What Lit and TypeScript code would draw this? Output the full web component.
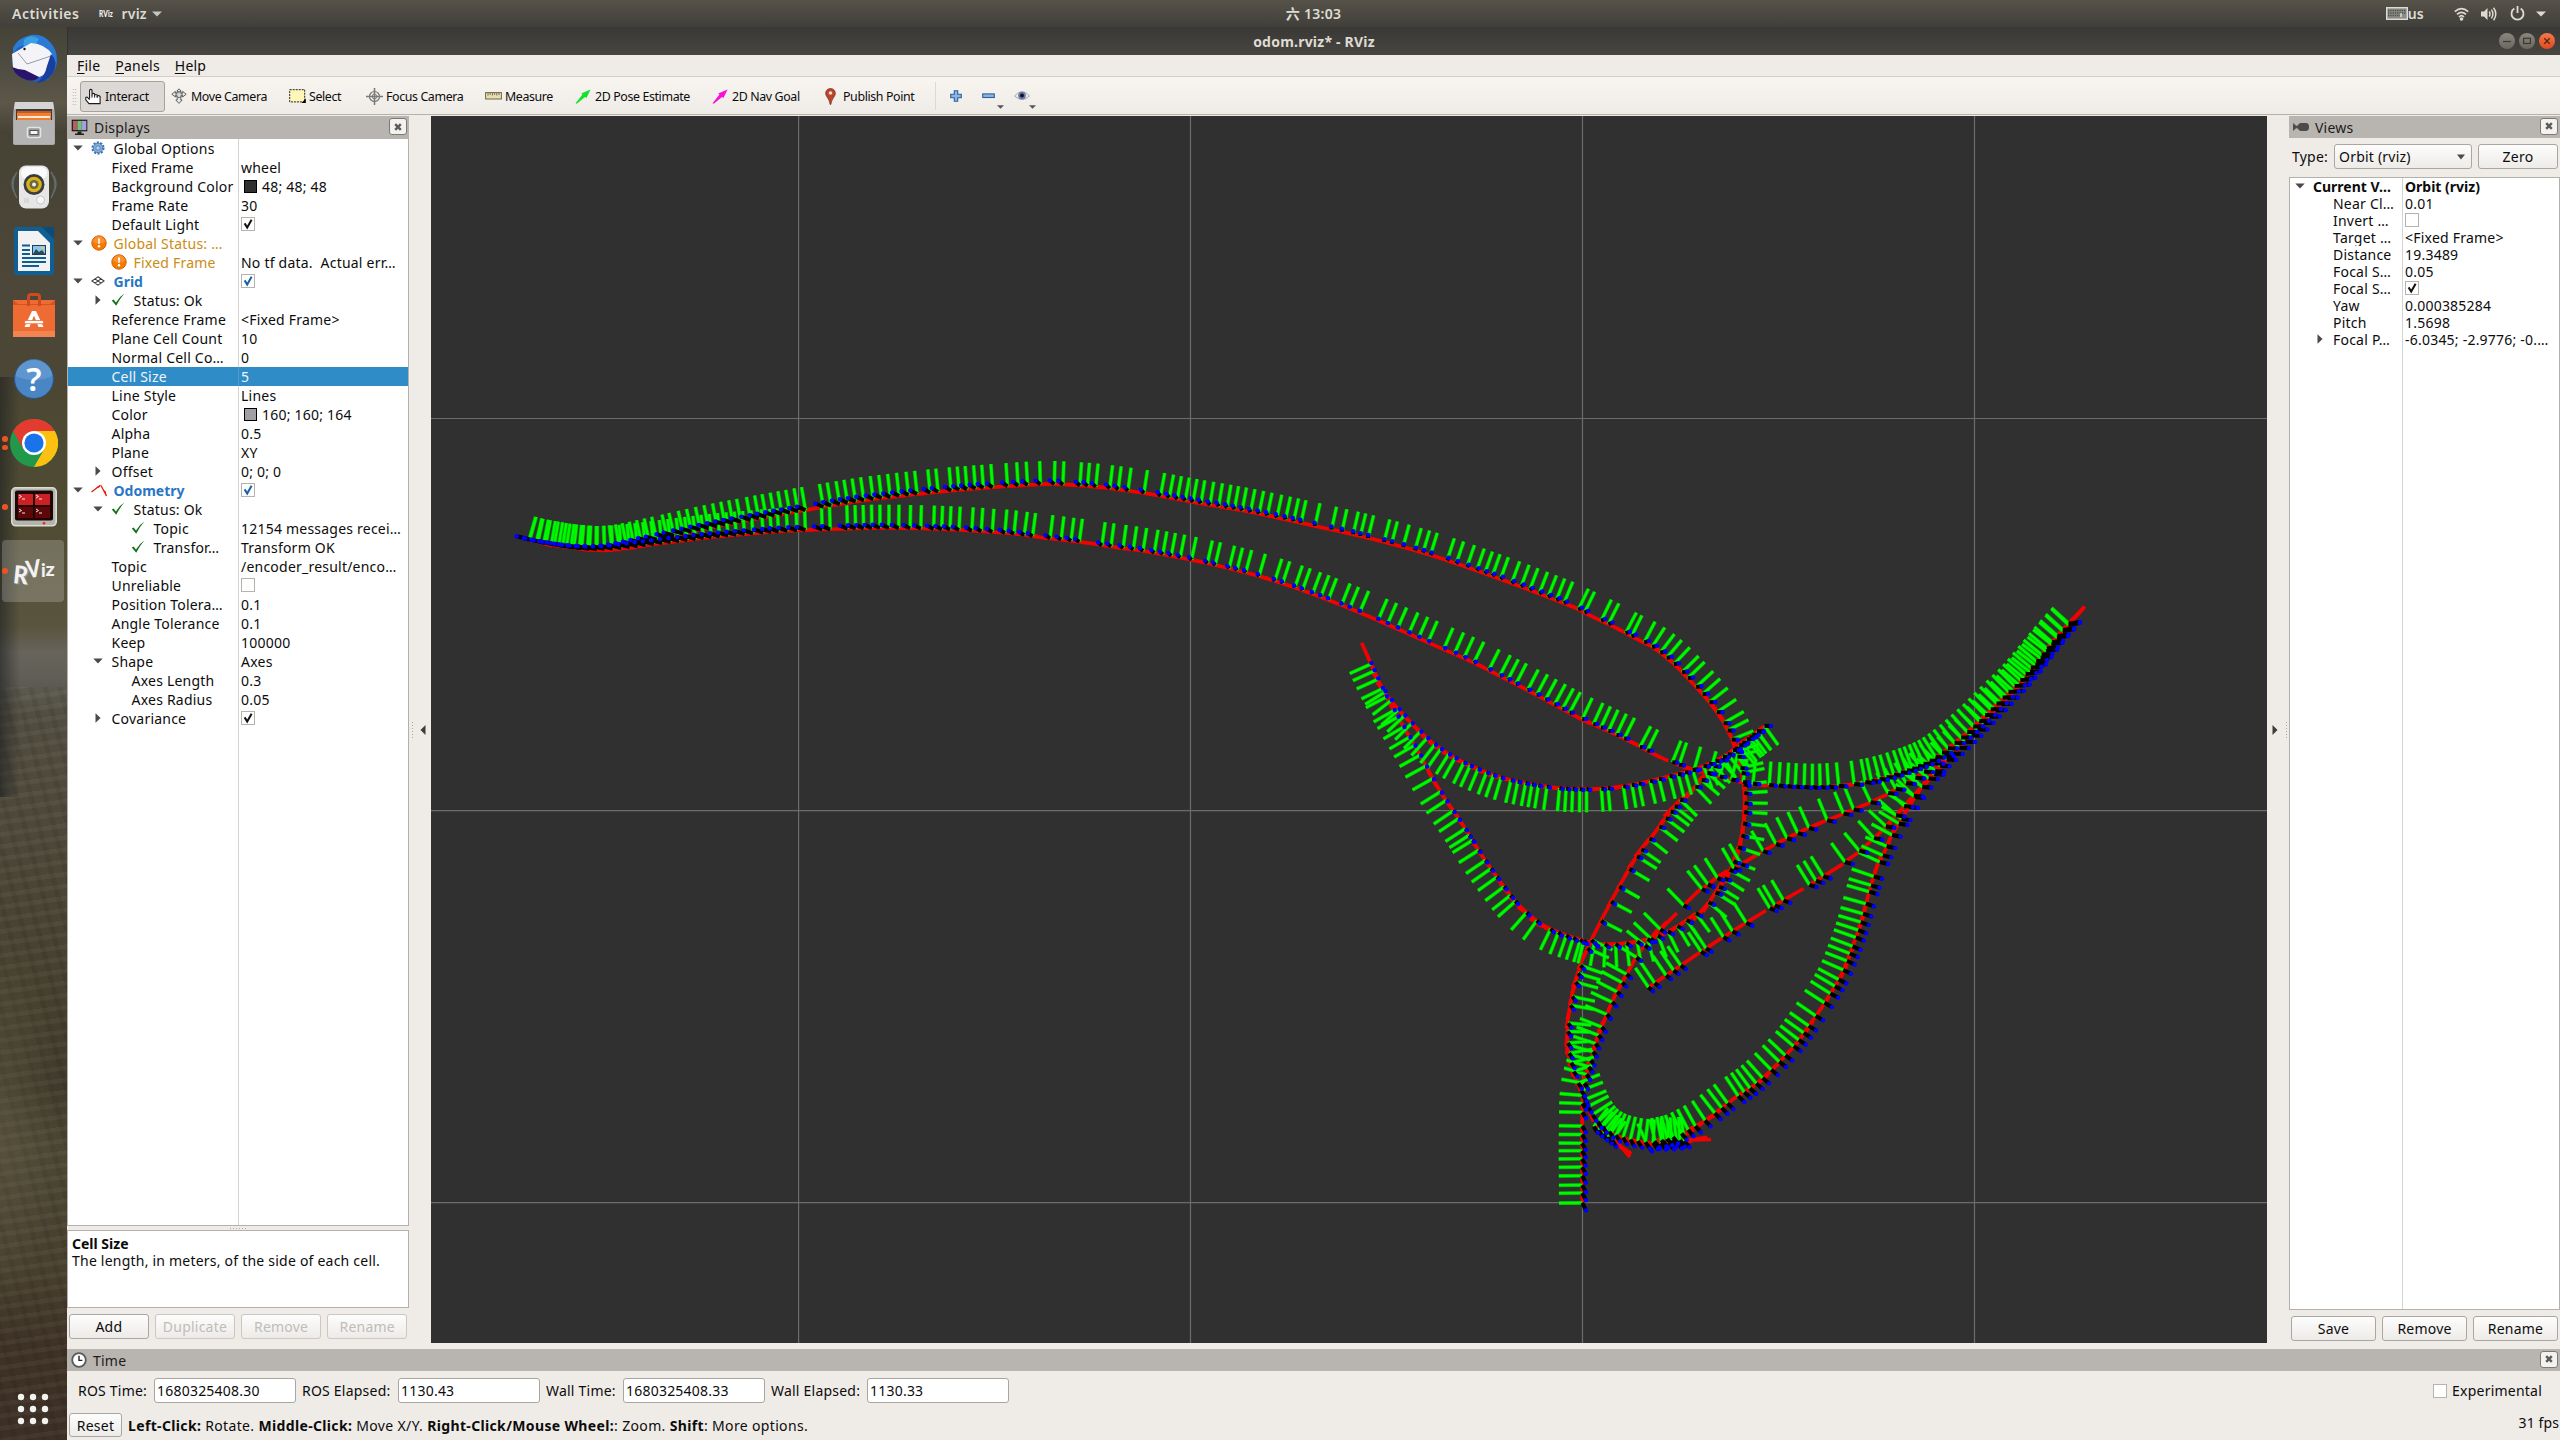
import { LitElement, html, svg, css, nothing, TemplateResult } from "lit";
import { customElement, property } from "lit/decorators.js";
import { classMap } from "lit/directives/class-map.js";

/* ---------- odometry trail ---------- */

type Pt = [number, number];
type Mark =
  | { axis: 0 | 1; at: number[]; k?: number; o?: number }
  | { step: number; axis?: 0 | 1; until?: number };
interface Trail { points: Pt[]; marks: Mark[] }

const VIEW = { x: 431, y: 116, w: 1836, h: 1227 };
const FOCUS: Pt = [1349, 730];
const AXIS = 23.3;
const MAX_GAP = 110;

const TIP_LEFT: Pt[] = [[522, 537], [532, 540], [543, 542.5], [557, 545], [573, 547.5], [590, 549], [606, 549]];

const TRAILS: Trail[] = [
  {
    // upper arc, then down, west and up to the north-west turning point
    points: [...TIP_LEFT, [622, 547], [655, 540], [704, 529], [745, 521], [806, 510], [867, 500], [937, 492], [990, 487.5], [1039, 484.5],
      [1064, 484.7], [1097, 487], [1143, 493], [1193, 502], [1250, 512], [1315, 526], [1368, 538], [1430, 555], [1500, 579], [1563, 603],
      [1585, 613], [1608, 624], [1631, 636], [1649, 645], [1668, 659], [1689.5, 680], [1710, 703], [1724, 724], [1733, 743], [1740.5, 768],
      [1744, 790], [1744, 813], [1741, 837], [1737, 850], [1731, 867], [1720, 885], [1708, 903], [1695, 914], [1674, 928], [1651, 938],
      [1626, 943], [1605, 944], [1590, 942], [1575, 938], [1553, 930], [1536, 920], [1520, 906], [1508, 892], [1485, 860], [1464, 827], [1439.5, 790],
      [1416.5, 749], [1396, 714], [1383, 690], [1370.6, 663]],
    marks: [
      { step: 7.4, axis: 0, until: 664 },
      { axis: 0, o: 503, k: 2.45, at: [403, 420, 442, 463, 484, 505, 525, 545, 564, 584, 607, 627, 645, 665, 684, 703, 723, 742, 786, 805, 826, 845, 865, 885, 908, 928, 949, 971, 994, 1015, 1047, 1067, 1098, 1118, 1137, 1158, 1178, 1200, 1237, 1263, 1286, 1318] },
      { axis: 0, o: 1060, k: 3, at: [-16, 10, 60, 84, 109, 150, 175, 204, 252, 302, 328, 352, 376, 400, 424, 450, 477, 501, 524, 547, 572, 598, 623, 652, 677, 702, 724, 766, 816, 846, 880, 902, 925, 972, 995, 1030, 1065, 1090, 1112, 1162, 1190, 1222, 1250, 1275, 1298, 1322, 1355, 1383, 1410, 1438, 1465, 1490, 1512, 1555] },
      { axis: 0, o: 1340, k: 1.96, at: [480, 512, 527, 560, 572, 597, 612, 628] },
      { axis: 1, o: 600, k: 3, at: [174, 193, 218, 235, 262, 283, 307, 337, 370, 392, 420, 455, 470, 505, 520, 555, 580, 610, 637, 670, 707, 742, 785, 810, 835, 860, 878, 908, 940] },
      { step: 10.5, axis: 0, until: 1582 },
      { axis: 0, o: 1340, k: 1.96, at: [470, 457, 443, 428, 412, 385, 366] },
      { axis: 1, o: 600, k: 3, at: [903, 885, 860, 830, 805, 780, 750, 720, 705, 685, 655, 632, 600, 575, 535, 497, 465, 435, 410, 380, 350, 330, 290, 265, 237, 212, 192] },
    ],
  },
  {
    // curve that backs up into the north-west turning point
    points: [[1764.5, 726], [1748, 738], [1733, 750], [1715, 761], [1692, 770], [1666, 777], [1636, 784], [1608, 788], [1585, 789], [1559, 788],
      [1531, 784], [1503, 778], [1478, 769], [1455, 758], [1434, 744], [1416.5, 728], [1401, 712], [1390, 699], [1381, 685], [1370.6, 663]],
    marks: [
      { axis: 0, o: 1340, k: 1.96, at: [832, 818, 808, 797, 782, 770, 750, 735, 723, 712, 690, 676, 662, 645, 625, 607, 585, 572, 555, 525, 512, 483, 470, 455, 443, 430, 405, 388, 376, 363, 348, 335, 315, 300, 287, 270, 255, 242, 225, 212, 197, 185, 170, 157, 140, 126, 115, 100, 88] },
    ],
  },
  {
    // lower arc running east and up to the north-east turning point
    points: [...TIP_LEFT, [622, 548], [655, 544], [704, 538], [741, 534.5], [786, 531], [839, 529], [888, 528], [949, 529.5], [1006, 533], [1035, 536.5],
      [1080, 542], [1100, 545], [1143, 551], [1192, 560], [1247, 573], [1293, 587], [1341, 605], [1378, 620.5], [1427, 642], [1473, 662.5], [1527, 690],
      [1568, 712], [1582, 719], [1621, 737], [1646, 750], [1674, 763], [1697, 770], [1717.5, 776], [1743, 782], [1771, 785], [1814, 787], [1845, 785],
      [1871, 781], [1896, 774], [1927, 762], [1952, 745], [1978, 722], [1998, 702], [2018.6, 682], [2034, 664], [2054, 640], [2073, 619]],
    marks: [
      { step: 8, axis: 0, until: 758 },
      { axis: 0, o: 500, k: 2.45, at: [645, 665, 683, 705, 728, 749, 790, 810, 852, 872, 892, 912, 932, 953, 977, 1005, 1032, 1063, 1083, 1103, 1125, 1157, 1180, 1207, 1237, 1260, 1285, 1305, 1348, 1375, 1400, 1420, 1475, 1497] },
      { axis: 0, o: 1060, k: 3, at: [150, 190, 220, 250, 283, 310, 335, 362, 395, 442, 466, 508, 532, 558, 597, 645, 668, 705, 728, 758, 783, 806, 845, 870, 900, 955, 983, 1012, 1047, 1076, 1104, 1152, 1184, 1213, 1242, 1287, 1320, 1344, 1368, 1403, 1430, 1457, 1484, 1508, 1530] },
      { axis: 0, o: 1340, k: 1.96, at: [475, 497, 512, 527, 542, 558, 588, 603, 652, 665, 695, 725, 745, 768, 790, 810, 842, 860, 877, 893, 910, 926, 942, 958, 978, 1008, 1030, 1042, 1058, 1072, 1086, 1100, 1112, 1122, 1133, 1144, 1156, 1168, 1180, 1192, 1205] },
      { step: 8 },
    ],
  },
  {
    // vertical start segment, up through the inner loop and on to the north-east
    points: [[1582.3, 1204], [1582, 1150], [1582.3, 1117], [1582.8, 1097], [1585, 1080], [1590, 1063], [1595, 1045], [1601.7, 1027], [1611.7, 1003],
      [1623.5, 980], [1636.7, 957], [1648, 941.7], [1661.7, 928], [1684, 905], [1702, 889], [1717.5, 878], [1743, 863], [1776, 844], [1809, 828],
      [1842.5, 814], [1871, 802], [1893.6, 790], [1916.5, 777], [1932, 765], [1952, 750]],
    marks: [
      { axis: 1, o: 900, k: 3, at: [908, 878, 855, 827, 800, 776, 752, 728, 703, 678, 636, 610, 585, 550, 522, 500, 480, 455, 430, 405, 380, 342, 305, 275, 247, 222, 172, 135, 115, 88] },
      { axis: 0, o: 1340, k: 1.96, at: [674, 710, 722, 740, 773, 787, 830, 855, 877, 898, 920, 955, 987, 1007, 1040, 1075, 1090, 1110, 1128, 1145, 1165, 1185] },
    ],
  },
  {
    // straight middle branch
    points: [[1648, 987.5], [1674, 970], [1702, 951], [1733, 931], [1768.6, 909], [1784, 900], [1809, 885], [1845, 862], [1873, 839], [1888, 824],
      [1906, 804], [1927, 782], [1945, 762]],
    marks: [
      { axis: 0, o: 1340, k: 1.96, at: [605, 617, 640, 654, 668, 708, 718, 752, 770, 797, 843, 853, 870, 920, 933, 948, 990, 1018, 1047, 1070, 1090, 1106, 1125, 1142, 1165] },
    ],
  },
  {
    // south-west leg that drops past the origin and turns east at the bottom
    points: [[1764.5, 726], [1733, 750], [1712, 768], [1697, 785], [1679, 801], [1659, 827], [1641, 850], [1619, 887], [1601, 921], [1590, 943],
      [1580, 967], [1572, 997], [1568, 1024], [1568, 1045], [1572, 1066], [1581, 1090], [1588, 1107], [1598, 1122], [1610, 1132], [1624, 1138], [1644, 1142], [1667, 1143],
      [1690, 1140]],
    marks: [
      { step: 9, axis: 1, until: 780 },
      { axis: 1, o: 600, k: 3, at: [560, 600, 620, 635, 655, 680, 717, 750, 770, 808, 860, 905, 963, 1020, 1045, 1097, 1120, 1147, 1190] },
      { axis: 1, o: 900, k: 3, at: [317, 370, 395, 430, 460, 490, 515, 550, 573, 600, 620, 645, 665, 680] },
      { step: 7.5 },
    ],
  },
  {
    // outer loop from the bottom turn up the right side to the north-east turning point
    points: [[1637, 1142], [1655, 1141], [1673, 1137], [1690, 1129], [1707, 1119], [1728, 1103], [1753, 1086], [1772, 1069], [1793, 1047], [1808, 1027],
      [1825, 1002], [1840, 977], [1850, 953], [1859, 928], [1868, 896], [1875, 873], [1883, 855], [1891, 837], [1904, 815], [1916.5, 795],
      [1929, 778], [1942, 764], [1957, 750], [1975, 732], [1998, 708], [2018.6, 686], [2034, 667], [2054, 641], [2071, 622]],
    marks: [
      { axis: 0, o: 1540, k: 3, at: [345, 365, 382, 400, 425, 445, 467, 496, 525, 545, 563, 595, 613, 630, 650, 668, 694, 718, 737, 762, 777, 792, 807] },
      { axis: 1, o: 900, k: 3, at: [347, 308, 280, 258, 238, 210, 182, 160, 138, 112, 90, 65, 40, 10] },
      { axis: 1, o: 600, k: 3, at: [875, 855, 828, 785, 765, 738, 705, 670, 655, 620, 590, 560, 535, 512, 497] },
      { step: 8.4 },
    ],
  },
  {
    // short reversing moves at the bottom of the loop
    points: [[1589, 1123], [1597, 1129], [1606, 1136], [1616, 1143]],
    marks: [{ step: 5.5 }],
  },
  {
    points: [[1640, 1149], [1652, 1143], [1666, 1141], [1684, 1140]],
    marks: [{ step: 8 }],
  },
];

/** Catmull-Rom subdivision of the control points. */
function densify(p: Pt[]): Pt[] {
  const out: Pt[] = [];
  for (let i = 0; i < p.length - 1; i++) {
    const a = p[Math.max(0, i - 1)], b = p[i], c = p[i + 1], d = p[Math.min(p.length - 1, i + 2)];
    const n = Math.max(6, Math.ceil(Math.hypot(c[0] - b[0], c[1] - b[1]) * 2));
    for (let j = 0; j < n; j++) {
      const t = j / n, t2 = t * t, t3 = t2 * t;
      const f = (k: 0 | 1) =>
        0.5 * (2 * b[k] + (c[k] - a[k]) * t + (2 * a[k] - 5 * b[k] + 4 * c[k] - d[k]) * t2 + (3 * b[k] - a[k] - 3 * c[k] + d[k]) * t3);
      out.push([f(0), f(1)]);
    }
  }
  out.push(p[p.length - 1]);
  return out;
}

function poses(trail: Trail): number[][] {
  const c = densify(trail.points);
  const dist = (a: number, b: number) => Math.hypot(c[b][0] - c[a][0], c[b][1] - c[a][1]);
  const res: number[][] = [];
  let i = 0;
  const emit = (n: number) => {
    const w = 14;
    const a = c[Math.max(0, n - w)], b = c[Math.min(c.length - 1, n + w)];
    const l = Math.hypot(b[0] - a[0], b[1] - a[1]) || 1;
    res.push([c[n][0], c[n][1], (b[0] - a[0]) / l, (b[1] - a[1]) / l]);
  };
  for (const m of trail.marks) {
    if ("at" in m) {
      for (const raw of m.at) {
        const v = (m.o ?? 0) + raw / (m.k ?? 1);
        let j = i, run = 0, hit = false;
        while (j < c.length - 1 && run < MAX_GAP) {
          if ((c[j][m.axis] - v) * (c[j + 1][m.axis] - v) <= 0) { hit = true; break; }
          run += dist(j, j + 1);
          j++;
        }
        if (hit) { emit(j); i = j + 1; }
      }
    } else {
      let acc = 0;
      while (i < c.length - 1) {
        const q = c[i], r = c[i + 1];
        if (m.axis !== undefined && (q[m.axis] - m.until!) * (r[m.axis] - m.until!) <= 0) break;
        acc += dist(i, i + 1);
        i++;
        if (acc >= m.step) { emit(i); acc = 0; }
      }
    }
  }
  return res;
}

function buildTrails() {
  let red = "", green = "", black = "", blue = "";
  const n = (v: number) => v.toFixed(1);
  for (const t of TRAILS) {
    for (const [x, y, hx, hy] of poses(t)) {
      const px = x - VIEW.x, py = y - VIEW.y;
      const bx = px + (x - FOCUS[0]) * 0.0157, by = py + (y - FOCUS[1]) * 0.0157;
      red += `M${n(px)} ${n(py)}l${n(hx * AXIS)} ${n(hy * AXIS)}`;
      green += `M${n(px)} ${n(py)}l${n(hy * AXIS)} ${n(-hx * AXIS)}`;
      black += `M${n(px)} ${n(py)}L${n(bx)} ${n(by)}`;
      blue += `M${n(bx)} ${n(by)}h.1`;
    }
  }
  red += `M${1617 - VIEW.x} ${1142 - VIEW.y}L${1630 - VIEW.x} ${1157 - VIEW.y}M${1690 - VIEW.x} ${1140 - VIEW.y}L${1711 - VIEW.x} ${1139.5 - VIEW.y}`;
  return { red, green, black, blue };
}
const PATHS = buildTrails();

@customElement("rviz-scene")
class RvizScene extends LitElement {
  static styles = css`
    :host { display: block; background: #303030; overflow: hidden; }
    svg { display: block; }
    path { fill: none; }
    .grid { stroke: #6c6c6d; stroke-width: 1.2; }
    .red { stroke: #f50000; stroke-width: 3.6; }
    .edge { stroke: #00a500; stroke-width: 4; }
    .green { stroke: #00f800; stroke-width: 2.6; }
    .black { stroke: #000; stroke-width: 4; }
    .blue { stroke: #0000ff; stroke-width: 4.4; stroke-linecap: round; }
  `;
  render() {
    return html`<svg width=${VIEW.w} height=${VIEW.h}>
      <path class="grid" d="M367.6 0V1227M759.5 0V1227M1151.5 0V1227M1543.5 0V1227M0 302.5H1836M0 694.6H1836M0 1086.6H1836" />
      <path class="red" d=${PATHS.red} />
      <path class="edge" d=${PATHS.green} />
      <path class="green" d=${PATHS.green} />
      <path class="black" d=${PATHS.black} />
      <path class="blue" d=${PATHS.blue} />
    </svg>`;
  }
}

/* ---------- icons ---------- */

const check = (blue: boolean) => html`<svg width="12" height="12" viewBox="0 0 12 12"><path d="M2.6 5.4L5.2 9.6L9.6 1.8" fill="none" stroke=${blue ? "#1b5fa8" : "#111"} stroke-width="2"/></svg>`;
const triDown = html`<svg width="10" height="6" viewBox="0 0 10 6"><path d="M.3.5H9.7L5 5.6Z" fill="#4a4a4a"/></svg>`;
const triRight = html`<svg width="6" height="10" viewBox="0 0 6 10"><path d="M.5.3V9.7L5.6 5Z" fill="#4a4a4a"/></svg>`;
const closeX = html`<svg width="8" height="8" viewBox="0 0 8 8"><path d="M1.2 1.2L6.8 6.8M6.8 1.2L1.2 6.8" stroke="#5c5c58" stroke-width="2.5"/></svg>`;

const ICONS: Record<string, TemplateResult> = {
  gear: html`<svg width="14" height="14" viewBox="0 0 14 14"><circle cx="7" cy="7" r="5.6" fill="none" stroke="#3b6ea8" stroke-width="1.9" stroke-dasharray="2.1 1.4"/><circle cx="7" cy="7" r="4.7" fill="#86aedb" stroke="#4a7fbb"/><circle cx="7" cy="7" r="2.2" fill="#b8d0ec" stroke="#4478b4" stroke-width=".8"/></svg>`,
  warn: html`<svg width="16" height="16" viewBox="0 0 16 16"><circle cx="8" cy="8" r="7.2" fill="#f57900" stroke="#d05f00"/><path d="M2 7a6 6 0 0 1 12 0q-6 3-12 0" fill="#ffa85c" opacity=".5"/><path d="M7 3.5h2L8.6 9H7.4Z" fill="#fff"/><circle cx="8" cy="11.3" r="1.2" fill="#fff"/></svg>`,
  grid: html`<svg width="14" height="10" viewBox="0 0 14 10"><path d="M7 .8L13.2 5L7 9.2L.8 5ZM3.9 2.9L10.1 7.1M10.1 2.9L3.9 7.1" fill="none" stroke="#3a3a3a" stroke-width="1.1"/></svg>`,
  ok: html`<svg width="15" height="14" viewBox="0 0 15 14"><path d="M.8 7.6L2.6 6.4L5 9.6Q8 4 13.4.6Q8.6 6 5.2 12.8Z" fill="#17711c"/></svg>`,
  odom: html`<svg width="17" height="13" viewBox="0 0 17 13"><path d="M.5 8L9 1.4M10 1.5L15.5 12" stroke="#e81c0c" stroke-width="1.3" fill="none"/><path d="M5 3.4L10.5.6L8 3.8ZM12.4 6L14.6 7L15.8 12.8Z" fill="#e81c0c"/></svg>`,
  monitor: html`<svg width="17" height="17" viewBox="0 0 17 17"><rect x=".7" y=".7" width="15.6" height="11.6" fill="#111"/><rect x="1.8" y="1.8" width="4.6" height="9.4" fill="#b35f66"/><rect x="6.4" y="1.8" width="4.4" height="9.4" fill="#78c078"/><rect x="10.8" y="1.8" width="4.6" height="9.4" fill="#a3a0e0"/><path d="M6.5 12.5h4v2h2.5v1.6h-9v-1.6h2.5Z" fill="#222"/></svg>`,
  camera: html`<svg width="16" height="10" viewBox="0 0 16 10"><path d="M0 1L4.5 5L0 9Z" fill="#4a4a4a"/><rect x="5" y="1" width="11" height="8" rx="3.4" fill="#4a4a4a"/><path d="M3.5 3.5h3v3h-3z" fill="#4a4a4a"/></svg>`,
  clock: html`<svg width="16" height="16" viewBox="0 0 16 16"><circle cx="8" cy="8" r="6.8" fill="#fff" stroke="#5a5a5a" stroke-width="1.8"/><path d="M8 3.8V8.4H11.4" fill="none" stroke="#222" stroke-width="1.4"/></svg>`,
  hand: html`<svg width="16" height="17" viewBox="0 0 16 17"><path d="M4.6 10.5V2.2q1.2-1.6 2.4 0V7.4V6q1.2-1.3 2.6 0v1q1.3-1 2.6 0v1q1.6-1 2.9.4V15.6H4L.8 11.8V9.4q1.2-.8 2 .2l1.8 2" fill="#fff" stroke="#1c1c1c" stroke-width="1.1"/><path d="M7 7v2.6M9.6 7v2.6M12.2 8v2" stroke="#1c1c1c"/></svg>`,
  move: html`<svg width="16" height="16" viewBox="0 0 16 16"><path d="M8 .8L10.2 3.2H8.9V5.2H11.6V3.4L15.2 6.2L11.6 9V7.4H9.8V12H11.2L8 15.4L4.8 12H6.2V7.4H4.4V9L.8 6.2L4.4 3.4V5.2H7.1V3.2H5.8Z" fill="#e6e6e6" stroke="#555" stroke-width=".9"/><circle cx="8" cy="6.6" r="3" fill="#ccc" fill-opacity=".5" stroke="#555" stroke-width=".8"/></svg>`,
  select: html`<svg width="17" height="14" viewBox="0 0 17 14"><rect x=".7" y=".7" width="15" height="12.2" fill="#fff6b8" stroke="#222" stroke-dasharray="2 1"/><path d="M16.8 9.5V14H12.5Z" fill="#000"/></svg>`,
  focus: html`<svg width="17" height="17" viewBox="0 0 17 17"><circle cx="8.5" cy="8.5" r="5" fill="none" stroke="#7a7a7a" stroke-width="1.2"/><circle cx="8.5" cy="8.5" r="2.4" fill="none" stroke="#8a8a8a"/><path d="M8.5 0V17M0 8.5H17" stroke="#7a7a7a" stroke-width="1.6"/></svg>`,
  ruler: html`<svg width="17" height="8" viewBox="0 0 17 8"><rect x=".6" y=".6" width="15.8" height="6.4" fill="#e9dfae" stroke="#6b6650"/><path d="M3 1v2.6M5.2 1v2M7.4 1v2.6M9.6 1v2M11.8 1v2.6M14 1v2" stroke="#6b6650" stroke-width=".9"/></svg>`,
  pose: html`<svg width="16" height="15" viewBox="0 0 16 15"><path d="M.6 14.2L7.4 5.6L6.2 4.4L15.6.6L11.4 9L10 8L1.8 14.8Z" fill="#12e22c"/></svg>`,
  nav: html`<svg width="16" height="15" viewBox="0 0 16 15"><path d="M.6 14.2L7.4 5.6L6.2 4.4L15.6.6L11.4 9L10 8L1.8 14.8Z" fill="#f810d8"/></svg>`,
  pin: html`<svg width="11" height="17" viewBox="0 0 11 17"><path d="M5.5.5a4.9 4.9 0 0 1 4.9 5C10.4 8.4 6.4 11 5.9 16.4H5.1C4.6 11 .6 8.4.6 5.5a4.9 4.9 0 0 1 4.9-5Z" fill="#b9442c" stroke="#7c2e1c" stroke-width=".7"/><circle cx="5.5" cy="5" r="1.8" fill="#f3d8cf"/></svg>`,
  plus: html`<svg width="12" height="12" viewBox="0 0 12 12"><path d="M4.3.7h3.4v3.6h3.6v3.4H7.7v3.6H4.3V7.7H.7V4.3H4.3Z" fill="#8cb4e2" stroke="#2f5f9e" stroke-width="1.1"/></svg>`,
  minus: html`<svg width="13" height="6" viewBox="0 0 13 6"><rect x=".7" y=".9" width="11.6" height="3.6" fill="#8cb4e2" stroke="#2f5f9e" stroke-width="1.1"/></svg>`,
  eye: html`<svg width="16" height="12" viewBox="0 0 16 12"><path d="M.5 6Q8-2.8 15.5 6Q8 13 .5 6Z" fill="#ececec" stroke="#9a9a9a" stroke-width=".8"/><circle cx="8" cy="5.6" r="3.9" fill="#6b79b0"/><circle cx="8" cy="5.6" r="2" fill="#15151f"/></svg>`,
};

/* ---------- property tree ---------- */

interface Row {
  label: string; depth: number; value?: string; icon?: string; open?: boolean;
  check?: boolean; tint?: "warn" | "display"; swatch?: string; sel?: boolean; bold?: boolean;
}

const DISPLAY_ROWS: Row[] = [
  { label: "Global Options", depth: 0, icon: "gear", open: true },
  { label: "Fixed Frame", depth: 1, value: "wheel" },
  { label: "Background Color", depth: 1, value: "48; 48; 48", swatch: "#303030" },
  { label: "Frame Rate", depth: 1, value: "30" },
  { label: "Default Light", depth: 1, check: true },
  { label: "Global Status: …", depth: 0, icon: "warn", open: true, tint: "warn" },
  { label: "Fixed Frame", depth: 1, icon: "warn", tint: "warn", value: "No tf data.\u00a0 Actual err…" },
  { label: "Grid", depth: 0, icon: "grid", open: true, tint: "display", check: true },
  { label: "Status: Ok", depth: 1, icon: "ok", open: false },
  { label: "Reference Frame", depth: 1, value: "<Fixed Frame>" },
  { label: "Plane Cell Count", depth: 1, value: "10" },
  { label: "Normal Cell Co…", depth: 1, value: "0" },
  { label: "Cell Size", depth: 1, value: "5", sel: true },
  { label: "Line Style", depth: 1, value: "Lines" },
  { label: "Color", depth: 1, value: "160; 160; 164", swatch: "#a0a0a4" },
  { label: "Alpha", depth: 1, value: "0.5" },
  { label: "Plane", depth: 1, value: "XY" },
  { label: "Offset", depth: 1, value: "0; 0; 0", open: false },
  { label: "Odometry", depth: 0, icon: "odom", open: true, tint: "display", check: true },
  { label: "Status: Ok", depth: 1, icon: "ok", open: true },
  { label: "Topic", depth: 2, icon: "ok", value: "12154 messages recei…" },
  { label: "Transfor…", depth: 2, icon: "ok", value: "Transform OK" },
  { label: "Topic", depth: 1, value: "/encoder_result/enco…" },
  { label: "Unreliable", depth: 1, check: false },
  { label: "Position Tolera…", depth: 1, value: "0.1" },
  { label: "Angle Tolerance", depth: 1, value: "0.1" },
  { label: "Keep", depth: 1, value: "100000" },
  { label: "Shape", depth: 1, value: "Axes", open: true },
  { label: "Axes Length", depth: 2, value: "0.3" },
  { label: "Axes Radius", depth: 2, value: "0.05" },
  { label: "Covariance", depth: 1, check: true, open: false },
];

const VIEW_ROWS: Row[] = [
  { label: "Current V…", depth: 0, value: "Orbit (rviz)", open: true, bold: true },
  { label: "Near Cl…", depth: 1, value: "0.01" },
  { label: "Invert …", depth: 1, check: false },
  { label: "Target …", depth: 1, value: "<Fixed Frame>" },
  { label: "Distance", depth: 1, value: "19.3489" },
  { label: "Focal S…", depth: 1, value: "0.05" },
  { label: "Focal S…", depth: 1, check: true },
  { label: "Yaw", depth: 1, value: "0.000385284" },
  { label: "Pitch", depth: 1, value: "1.5698" },
  { label: "Focal P…", depth: 1, value: "-6.0345; -2.9776; -0.…", open: false },
];

@customElement("property-tree")
class PropertyTree extends LitElement {
  @property({ attribute: false }) rows: Row[] = [];
  @property({ type: Number }) rowHeight = 19;
  @property({ type: Number }) split = 170;
  @property({ type: Number }) gap = 3.5;

  static styles = css`
    :host { display: block; box-sizing: border-box; background: #fff; border: 1px solid #b4b0ab; overflow: hidden; }
    .body { height: 100%; }
    .row { display: flex; align-items: center; white-space: nowrap; color: #0c0c0c; }
    .sel { background: #308cc6; color: #eef6fb; }
    .sel .name { border-color: #4f9ed0; }
    .name { box-sizing: border-box; height: 100%; display: flex; align-items: center; border-right: 1px solid #d4d4d4; flex: none; overflow: hidden; padding-bottom: 1px; }
    .arrow { width: 20px; display: flex; justify-content: center; flex: none; }
    .ico { width: 25.5px; box-sizing: border-box; padding-left: 3px; display: flex; align-items: center; flex: none; }
    .gap { flex: none; }
    .val { box-sizing: border-box; padding: 0 0 1px 2px; display: flex; align-items: center; height: 100%; }
    .warn { color: #ca8c12; }
    .display { color: #2a76c6; font-weight: 700; letter-spacing: 0; }
    .bold { font-weight: 700; letter-spacing: 0; }
    .box { box-sizing: border-box; width: 14px; height: 14px; border: 1px solid #b6b2ac; background: #fff; display: flex; align-items: center; justify-content: center; }
    .swatch { box-sizing: border-box; width: 13px; height: 13px; border: 1px solid #000; margin: 0 5px 0 3px; }
    .filler { height: 100%; }
  `;

  render() {
    const line = (r: Row) => html`<div class=${classMap({ row: true, sel: !!r.sel })} style="height:${this.rowHeight}px">
        <div class="name" style="width:${this.split}px">
          <span style="width:${r.depth * 20}px;flex:none"></span>
          <span class="arrow">${r.open === undefined ? nothing : r.open ? triDown : triRight}</span>
          ${r.icon ? html`<span class="ico">${ICONS[r.icon]}</span>` : html`<span class="gap" style="width:${this.gap}px"></span>`}
          <span class=${classMap({ warn: r.tint === "warn", display: r.tint === "display", bold: !!r.bold })}>${r.label}</span>
        </div>
        <div class=${classMap({ val: true, bold: !!r.bold })}>
          ${r.check === undefined ? nothing : html`<span class="box">${r.check ? check(!!r.tint) : nothing}</span>`}
          ${r.swatch ? html`<span class="swatch" style="background:${r.swatch}"></span>` : nothing}
          ${r.value === undefined ? nothing : html`<span>${r.value}</span>`}
        </div>
      </div>`;
    return html`<div class="body">${this.rows.map(line)}<div class="name filler" style="width:${this.split}px"></div></div>`;
  }
}

/* ---------- dock ---------- */

const DOCK: { icon: TemplateResult; dots: number; active?: boolean }[] = [
  {
    dots: 0,
    icon: html`<svg width="50" height="50" viewBox="0 0 50 50"><circle cx="25.5" cy="25" r="22.5" fill="#1f5fc0"/><path d="M4 14Q8 4 22 1q12-2 20 8q8 10 5 24q-4 10-11 14q6-14 2-24Q34 10 18 10Q8 12 4 20Z" fill="#2a7ad6"/><path d="M15 6Q22-1 30 5L27 10Q18 8 14 17Z" fill="#3aa0e4"/><path d="M3 20L22 9Q36 10 43 20L40 36Q34 42 30 43Q14 42 4 34Z" fill="#f4f4f8"/><path d="M9 19L18 30L42 22" fill="none" stroke="#9a9aa8" stroke-width="1"/><path d="M3 33Q10 36 16 36Q24 40 30 43Q26 48 18 46Q7 43 3 33Z" fill="#28146a"/><path d="M42 20Q50 28 44 39Q38 48 28 49Q36 42 38 32Z" fill="#173fa0"/><circle cx="15.5" cy="15" r="1.2" fill="#111"/></svg>`,
  },
  {
    dots: 0,
    icon: html`<svg width="44" height="46" viewBox="0 0 44 46"><path d="M3 2H41Q43 10 43 18V43Q43 45 41 45H3Q1 45 1 43V18Q1 10 3 2Z" fill="#a8a8a8"/><path d="M3 2H41L42 9H2Z" fill="#d4d4d4"/><rect x="4" y="9" width="36" height="12" fill="#3c3c3c"/><rect x="5" y="11" width="34" height="4" fill="#c25a28"/><rect x="5" y="13" width="34" height="8" fill="#f08030"/><rect x="6" y="16" width="32" height="2" fill="#f8e8d8"/><rect x="2" y="20" width="40" height="24" fill="#b4b4b4"/><rect x="15.5" y="27.5" width="13" height="10" rx="2" fill="#999" stroke="#e4e4e4" stroke-width="1.6"/><rect x="18" y="30.5" width="8" height="4" fill="#f4f4f4" stroke="#555"/></svg>`,
  },
  {
    dots: 0,
    icon: html`<svg width="50" height="46" viewBox="0 0 50 46"><path d="M8 8Q0 20 8 34M42 8Q50 20 42 34M5 12Q1 20 5 28M45 12Q49 20 45 28" fill="none" stroke="#6f8794" stroke-width="1.5" opacity=".6"/><rect x="10" y="1.5" width="30" height="43" rx="7" fill="#e6e6e6"/><rect x="12" y="3" width="26" height="12" rx="6" fill="#fafafa"/><circle cx="25" cy="20.5" r="10.5" fill="#3b3c3e"/><circle cx="25" cy="20.5" r="7.8" fill="#d8b21c"/><circle cx="25" cy="20.5" r="4.6" fill="#6c6a3a"/><circle cx="25" cy="20.5" r="2" fill="#eee"/><circle cx="31.5" cy="36" r="4" fill="#f6f6f6" stroke="#c9c9c9"/><rect x="15" y="34" width="5" height="5" fill="#d8d8d8"/></svg>`,
  },
  {
    dots: 0,
    icon: html`<svg width="40" height="48" viewBox="0 0 40 48"><path d="M3 0H28L40 12V45Q40 48 37 48H3Q0 48 0 45V3Q0 0 3 0Z" fill="#0f5f95"/><path d="M28 0H40V12Z" fill="#0a4a7c"/><path d="M4 4H24L36 16V44H4Z" fill="#f2f2f2"/><path d="M8 18.5h8M8 23h8M8 27h8M8 31h24M8 35h24M8 39h17" stroke="#0f5f95" stroke-width="2"/><rect x="18.5" y="18.5" width="13" height="9" fill="#8cc4ea" stroke="#1b3f5c"/><path d="M19 27l3-5 3 3 3-2 3 4z" fill="#2a4a5c"/><circle cx="28.5" cy="21" r="1.3" fill="#f8c840"/></svg>`,
  },
  {
    dots: 0,
    icon: html`<svg width="42" height="44" viewBox="0 0 42 44"><path d="M0 7H42V44H0Z" fill="#ee6c34"/><path d="M0 7L5 11H37L42 7V12H0Z" fill="#d65420"/><path d="M0 38H42V44H0Z" fill="#f28452"/><path d="M15.5 13V4Q15.5 1.6 18 1.6H24Q26.5 1.6 26.5 4V13" fill="none" stroke="#cf4a1c" stroke-width="3"/><path d="M19 18h4l7.5 16h-5L21 22.5L16.5 34h-5Z" fill="#fff"/><rect x="11.5" y="27.5" width="19" height="3.2" rx="1.5" fill="#fff" stroke="#ee6c34" stroke-width=".8"/></svg>`,
  },
  {
    dots: 0,
    icon: html`<svg width="42" height="42" viewBox="0 0 42 42"><circle cx="21" cy="21" r="19.5" fill="#4a86c4" stroke="#2a5788" stroke-width="1"/><path d="M2.5 18a18.6 18.6 0 0 1 37 0Q21 26 2.5 18Z" fill="#7aaade" opacity=".45"/><text x="21" y="33" text-anchor="middle" font-family="Noto Sans" font-size="33" font-weight="600" fill="#fff">?</text></svg>`,
  },
  {
    dots: 2,
    icon: html`<svg width="48" height="48" viewBox="0 0 48 48"><circle cx="24" cy="24" r="24" fill="#22994a"/><path d="M3.2 12A24 24 0 0 1 44.8 12H24L13.6 30Z" fill="#e33b2e"/><path d="M44.8 12A24 24 0 0 1 24 48L34.4 30L24 12Z" fill="#fcc010"/><path d="M3.2 12L13.6 30L24 24V12Z" fill="#e33b2e"/><circle cx="24" cy="24" r="12" fill="#fff"/><circle cx="24" cy="24" r="9.6" fill="#1a73e8"/></svg>`,
  },
  {
    dots: 1,
    icon: html`<svg width="46" height="40" viewBox="0 0 46 40"><rect x=".8" y=".8" width="44.4" height="38" rx="4" fill="#b4b4ac" stroke="#dcdcd6" stroke-width="1.6"/><rect x="4" y="3.5" width="38" height="30" rx="2" fill="#1c0606"/><rect x="7" y="7" width="15" height="11" fill="#cc2024"/><rect x="24" y="7" width="15" height="11" fill="#cc2024"/><rect x="7" y="20" width="15" height="11" fill="#5e0608"/><rect x="24" y="20" width="15" height="11" fill="#5e0608"/><path d="M8 8l2.5 1.5L8 11M11 12h3M25 8l2.5 1.5L25 11M28 12h3M8 22l2.5 1.5L8 25M11 26h3M25 22l2.5 1.5L25 25M28 26h3" stroke="#fff" stroke-width=".9" fill="none"/><circle cx="33" cy="36.3" r="1.3" fill="#e22"/></svg>`,
  },
  {
    dots: 1, active: true,
    icon: html`<svg width="62" height="44" viewBox="-8 -8 62 44"><g font-family="Lato" font-weight="900" fill="#8d8d8d"><text x="3" y="27" font-size="25" textLength="15" lengthAdjust="spacingAndGlyphs" transform="rotate(6 2 26)">R</text></g><g font-family="Lato" font-weight="900" fill="#f2f2f2"><text x="1.5" y="26" font-size="25" textLength="15" lengthAdjust="spacingAndGlyphs" transform="rotate(6 2 26)">R</text><text x="16" y="21" font-size="24" textLength="15" lengthAdjust="spacingAndGlyphs" transform="rotate(-8 17 20)">V</text><text x="30" y="20" font-size="18">i</text><text x="34.500" y="19" font-size="19" textLength="9.500" lengthAdjust="spacingAndGlyphs">z</text></g></svg>`,
  },
];

const TOOLS: [string, string, number][] = [
  ["move", "Move Camera", 118], ["select", "Select", 77], ["focus", "Focus Camera", 119], ["ruler", "Measure", 90],
  ["pose", "2D Pose Estimate", 137], ["nav", "2D Nav Goal", 113], ["pin", "Publish Point", 110],
];

@customElement("app-root")
class AppRoot extends LitElement {
  static styles = css`
    :host { display: block; width: 2560px; height: 1440px; overflow: hidden; font: 14px/17px "Noto Sans", "Noto Sans CJK SC", sans-serif; letter-spacing: .22px; color: #0c0c0c; }
    * { box-sizing: border-box; }
    .screen { height: 1440px; display: flex; flex-direction: column; background: #efebe7; }
    .top { height: 27px; flex: none; display: grid; grid-template-columns: 1fr auto 1fr; align-items: center; background: linear-gradient(#565249, #403f3a); color: #dfdbd2; font-weight: 600; }
    .top-left { display: flex; align-items: center; padding-left: 12px; white-space: nowrap; }
    .acts { letter-spacing: .5px; }
    .mini { margin: 0 7px 2px 20px; }
    .top-left .tri { margin-left: 5px; }
    .clock { padding-left: 67px; letter-spacing: .3px; }
    .tray { display: flex; align-items: center; justify-content: flex-end; padding-right: 14px; }
    .under { flex: 1; display: flex; min-height: 0; }
    .dock { width: 67px; flex: none; display: flex; flex-direction: column; background:
      radial-gradient(ellipse 60px 190px at 0 1090px, rgba(120,112,80,.3), transparent),
      linear-gradient(90deg, rgba(30,32,34,.6), transparent 20px) 0 350px / 67px 420px no-repeat,
      repeating-linear-gradient(172deg, rgba(255,250,220,.045) 0 4px, transparent 5px 12px) 0 660px / 67px 760px no-repeat,
      repeating-linear-gradient(75deg, rgba(0,0,0,.07) 0 4px, transparent 6px 14px) 0 660px / 67px 760px no-repeat,
      linear-gradient(#454238 0, #504d42 45px, #5c5748 75px, #474334 105px, #4c4738 260px, #4b4635 350px, #4c4832 380px, #514d34 520px, #59553f 600px, #66645a 625px, #605e56 650px, #514d40 690px, #4d4839 800px, #45402f 960px, #403a2c 1060px, #4b4634 1120px, #48402f 1240px, #3e3226 1320px, #3c2f26 1413px);
    }
    .slot { height: 64px; flex: none; display: flex; align-items: center; justify-content: center; position: relative; }
    .slot.active::before { content: ""; position: absolute; inset: 1px 3px 1px 2px; border-radius: 4px; background: rgba(255,255,255,.2); }
    .slot svg { position: relative; flex: none; }
    .dots { position: absolute; left: 2px; top: 0; bottom: 0; display: flex; flex-direction: column; gap: 3px; justify-content: center; }
    .dots i { width: 5.5px; height: 5.5px; border-radius: 50%; background: #e95420; }
    .apps { margin: auto 0 15px 17px; }
    .win { flex: 1; min-width: 0; display: flex; flex-direction: column; }
    .title { height: 28px; flex: none; display: grid; grid-template-columns: 1fr auto 1fr; align-items: center; background: linear-gradient(#393834, #484641); color: #dfdbd2; font-weight: 700; border-left: 1px solid #33322e; }
    .ctl { display: flex; justify-content: flex-end; gap: 4px; padding-right: 5px; }
    .ctl span { width: 16px; height: 16px; border-radius: 50%; background: linear-gradient(#8a877e, #6a675f); display: flex; align-items: center; justify-content: center; }
    .ctl .close { background: linear-gradient(#f37a4d, #de4a1c); }
    .menu { height: 22px; flex: none; display: flex; align-items: center; gap: 15px; padding-left: 10px; border-bottom: 1px solid #d3cfca; }
    u { text-underline-offset: 2px; }
    .tools { height: 38px; flex: none; display: flex; align-items: center; background: linear-gradient(#f8f5f1, #efebe7); border-bottom: 1px solid #b5b1ac; font-size: 12.4px; letter-spacing: -.38px; white-space: nowrap; padding-top: 1px; }
    .grip { width: 5px; height: 17px; margin: 0 3px 0 5px; background: radial-gradient(circle, #b8b4ae 30%, transparent 45%) 0 0 / 2.5px 3px; }
    .interact { width: 85px; height: 31px; border: 1px solid #a5a19c; border-radius: 3px; background: #dcd8d5; display: flex; align-items: center; padding-left: 4px; margin-right: 6px; letter-spacing: -.2px; }
    .tool { display: flex; align-items: center; flex: none; }
    .ti { width: 20px; display: flex; flex: none; }
    .tsep { width: 1px; height: 28px; background: #dcd8d3; margin-right: 14px; }
    .tiny { display: flex; align-self: flex-end; margin: 0 0 5px 2px; }
    .main { flex: 1; min-height: 0; display: flex; padding-top: 1px; }
    .left { width: 342px; flex: none; display: flex; flex-direction: column; }
    .head { height: 23px; flex: none; display: flex; align-items: center; background: #b8b4b0; gap: 6px; padding-left: 4px; color: #1c1c1c; }
    .head .x { margin-left: auto; width: 18px; height: 17px; border-radius: 3px; border: 1px solid #7c7a76; background: #f4f2f0; display: flex; align-items: center; justify-content: center; margin-right: 2px; margin-bottom: 2px; }
    .tree-l { height: 1087px; flex: none; border-top: 0; }
    .handle { height: 4px; width: 18px; margin: 0 auto; background: radial-gradient(circle, #aaa6a1 30%, transparent 45%) 0 1px / 3px 3px; flex: none; }
    .desc { height: 78px; flex: none; background: #fff; border: 1px solid #b4b0ab; padding: 4px 4px; }
    .desc b { letter-spacing: 0; }
    .btns { display: flex; gap: 6.5px; padding: 6px 2px 0; }
    .btn { flex: 1; height: 25px; border: 1px solid #aaa6a1; border-radius: 3px; background: linear-gradient(#fdfdfd, #edebe8); display: flex; align-items: center; justify-content: center; white-space: nowrap; }
    .btn.off { color: #c0bcb8; border-color: #cbc7c3; }
    .split-l, .split-r { width: 22px; flex: none; display: flex; align-items: center; padding-bottom: 6px; }
    .split-l { padding-left: 2px; gap: 6px; }
    .split-r { padding-left: 5px; gap: 7px; }
    .vdots { width: 3px; height: 17px; background: radial-gradient(circle, #aaa6a1 30%, transparent 45%) 0 0 / 3px 3px; }
    rviz-scene { width: 1836px; height: 1227px; flex: none; }
    .right { width: 271px; flex: none; display: flex; flex-direction: column; }
    .right .head { height: 22px; }
    .type { display: flex; height: 39px; flex: none; align-items: center; padding: 0 2px 2px 3px; }
    .combo { width: 138px; height: 25px; border: 1px solid #aaa6a1; border-radius: 3px; background: linear-gradient(#fdfdfd, #edebe8); display: flex; align-items: center; justify-content: space-between; padding: 0 6px 0 4px; margin: 0 6px 0 auto; }
    .type .btn { flex: none; width: 80px; }
    .tree-r { height: 1133px; flex: none; }
    .right .btns { gap: 6px; }
    .time { height: 91px; flex: none; display: flex; flex-direction: column; }
    .time .head { height: 22px; }
    .fields { height: 39px; flex: none; display: flex; align-items: center; padding: 0 18px 0 11px; }
    .fields label { flex: none; white-space: nowrap; }
    .inp { width: 142px; height: 25px; flex: none; border: 1px solid #a9a5a0; border-radius: 3px; background: #fff; padding: 3px 2px; margin-right: 6px; }
    .exp { margin-left: auto; display: flex; gap: 5px; align-items: center; }
    .exp i { width: 14px; height: 14px; border: 1px solid #b6b2ac; background: #fff; }
    .status { flex: 1; display: flex; align-items: center; padding: 0 1px 0 2px; letter-spacing: .35px; }
    .status .btn { flex: none; width: 53px; height: 24px; margin-right: 6px; letter-spacing: .22px; }
    .fps { margin-left: auto; align-self: flex-start; padding-top: 4px; letter-spacing: .1px; }
  `;

  private head(icon: string, text: string) {
    return html`<div class="head">${ICONS[icon]}<span>${text}</span><span class="x">${closeX}</span></div>`;
  }

  private tri(color: string, w = 10) {
    return html`<svg class="tri" width=${w} height=${w < 8 ? 4 : 6} viewBox="0 0 10 6" preserveAspectRatio="none"><path d="M0 .5H10L5 5.5Z" fill=${color}/></svg>`;
  }

  render() {
    return html`<div class="screen">
      <div class="top">
        <div class="top-left"><span class="acts">Activities</span>
          <svg class="mini" width="15" height="18" viewBox="0 -3 15 18"><text x="0" y="9.5" font-family="Lato" font-weight="900" font-size="9.5" textLength="14" lengthAdjust="spacingAndGlyphs" fill="#f4f4f4">RViz</text></svg><span>rviz</span>${this.tri("#c8c4bb")}</div>
        <div class="clock">六 13:03</div>
        <div class="tray">
          <svg width="22" height="13" viewBox="0 0 22 13"><rect x=".7" y=".7" width="20.6" height="11.6" fill="#8c8c86" stroke="#dcdcd6" stroke-width="1.4"/><path d="M2 3.5H20M2 6H20M2 8.5H14" stroke="#4c4c48" stroke-width="1.3" stroke-dasharray="1.3 1"/><path d="M15 6v4" stroke="#fff"/></svg>
          <span style="margin-right:30px">us</span>
          <svg width="15" height="14" viewBox="0 0 15 14" style="margin-right:12px"><path d="M.8 4.6Q7.5-1.4 14.2 4.6M3 7.4Q7.5 3.2 12 7.4M5 10Q7.5 7.4 10 10" fill="none" stroke="#dfdbd2" stroke-width="1.7"/><circle cx="7.5" cy="12" r="1.8" fill="#dfdbd2"/></svg>
          <svg width="16" height="14" viewBox="0 0 16 14" style="margin-right:13px"><path d="M0 4.5H3L6.5 1V13L3 9.5H0Z" fill="#dfdbd2"/><path d="M8.2 4.5q1.6 2.5 0 5M10.4 2.6q3 4.4 0 8.8M12.6.8q4.4 6.2 0 12.4" fill="none" stroke="#dfdbd2" stroke-width="1.5"/></svg>
          <svg width="15" height="15" viewBox="0 0 15 15" style="margin-right:11px"><path d="M4.3 2.6A6 6 0 1 0 10.7 2.6M7.5 0V7" fill="none" stroke="#dfdbd2" stroke-width="1.8"/></svg>
          ${this.tri("#dfdbd2")}
        </div>
      </div>
      <div class="under">
        <div class="dock">
          ${DOCK.map((d) => html`<div class=${classMap({ slot: true, active: !!d.active })}>
            ${d.dots ? html`<span class="dots">${Array.from({ length: d.dots }, () => html`<i></i>`)}</span>` : nothing}${d.icon}</div>`)}
          <svg class="apps" width="32" height="32" viewBox="0 0 32 32">
            ${[4, 16, 28].map((y) => [4, 16, 28].map((x) => svg`<circle cx=${x} cy=${y} r="3.2" fill="#f2f2ee"/>`))}
          </svg>
        </div>
        <div class="win">
          <div class="title"><span></span><span>odom.rviz* - RViz</span>
            <div class="ctl">
              <span><svg width="8" height="8" viewBox="0 0 8 8"><path d="M0 4.5H8" stroke="#3a3935" stroke-width="1.2"/></svg></span>
              <span><svg width="8" height="8" viewBox="0 0 8 8"><rect x=".6" y="1.3" width="6.8" height="5.2" fill="none" stroke="#3a3935" stroke-width="1.2"/></svg></span>
              <span class="close"><svg width="8" height="8" viewBox="0 0 8 8"><path d="M1.3 1.3L6.7 6.7M6.7 1.3L1.3 6.7" stroke="#5a2410" stroke-width="1.3"/></svg></span>
            </div>
          </div>
          <div class="menu"><span><u>F</u>ile</span><span><u>P</u>anels</span><span><u>H</u>elp</span></div>
          <div class="tools">
            <span class="grip"></span>
            <div class="interact"><span class="ti">${ICONS.hand}</span>Interact</div>
            ${TOOLS.map(([i, t, w]) => html`<div class="tool" style="width:${w}px"><span class="ti" style=${i === "pin" ? "width:18px" : ""}>${ICONS[i]}</span>${t}</div>`)}
            <span class="tsep"></span>${ICONS.plus}<span style="width:20px"></span>${ICONS.minus}<span class="tiny">${this.tri("#555", 7)}</span>
            <span style="width:10px"></span>${ICONS.eye}<span class="tiny" style="margin-left:-1px">${this.tri("#555", 7)}</span>
          </div>
          <div class="main">
            <div class="left">
              ${this.head("monitor", "Displays")}
              <property-tree class="tree-l" .rows=${DISPLAY_ROWS} .split=${171}></property-tree>
              <div class="handle"></div>
              <div class="desc"><b>Cell Size</b><br />The length, in meters, of the side of each cell.</div>
              <div class="btns"><span class="btn">Add</span><span class="btn off">Duplicate</span><span class="btn off">Remove</span><span class="btn off">Rename</span></div>
            </div>
            <div class="split-l"><span class="vdots"></span><svg width="6" height="10" viewBox="0 0 6 10"><path d="M5.5 0V10L.5 5Z" fill="#3c3c3c"/></svg></div>
            <rviz-scene></rviz-scene>
            <div class="split-r"><svg width="6" height="10" viewBox="0 0 6 10"><path d="M.5 0V10L5.5 5Z" fill="#3c3c3c"/></svg><span class="vdots"></span></div>
            <div class="right">
              ${this.head("camera", "Views")}
              <div class="type"><span>Type:</span><span class="combo">Orbit (rviz)${this.tri("#4a4a4a", 8)}</span><span class="btn">Zero</span></div>
              <property-tree class="tree-r" .rows=${VIEW_ROWS} .rowHeight=${17} .split=${113} .gap=${3}></property-tree>
              <div class="btns"><span class="btn">Save</span><span class="btn">Remove</span><span class="btn">Rename</span></div>
            </div>
          </div>
          <div class="time">
            ${this.head("clock", "Time")}
            <div class="fields">
              <label style="width:76px">ROS Time:</label><span class="inp">1680325408.30</span>
              <label style="width:96px">ROS Elapsed:</label><span class="inp">1130.43</span>
              <label style="width:77px">Wall Time:</label><span class="inp">1680325408.33</span>
              <label style="width:96px">Wall Elapsed:</label><span class="inp">1130.33</span>
              <span class="exp"><i></i>Experimental</span>
            </div>
            <div class="status"><span class="btn">Reset</span>
              <span><b>Left-Click:</b> Rotate. <b>Middle-Click:</b> Move X/Y. <b>Right-Click/Mouse Wheel:</b>: Zoom. <b>Shift</b>: More options.</span>
              <span class="fps">31 fps</span></div>
          </div>
        </div>
      </div>
    </div>`;
  }
}
